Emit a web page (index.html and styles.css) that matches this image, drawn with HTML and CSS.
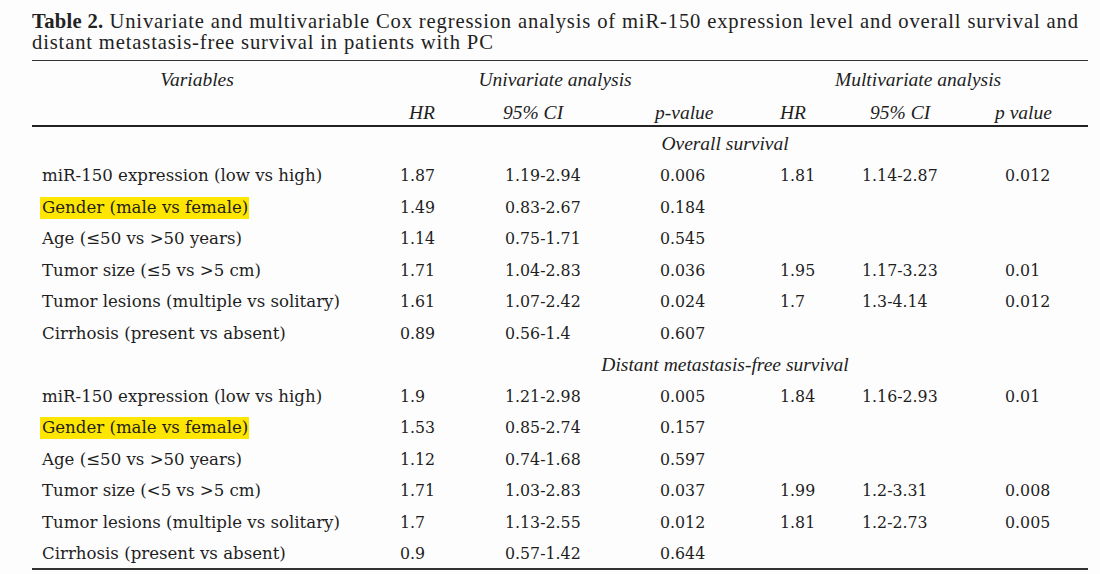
FILE: index.html
```html
<!DOCTYPE html>
<html lang="en">
<head>
<meta charset="utf-8">
<title>Table 2</title>
<link rel="stylesheet" href="styles.css">
</head>
<body>
<div class="page">
  <p class="caption"><span class="cap-label">Table 2.</span> Univariate and multivariable Cox regression analysis of miR-150 expression level and overall survival and<br>distant metastasis-free survival in patients with PC</p>
  <table class="tbl">
    <colgroup>
      <col class="c-var"><col class="c-hr"><col class="c-ci"><col class="c-p"><col class="c-mhr"><col class="c-mci"><col class="c-mp">
    </colgroup>
    <thead>
      <tr class="h1">
        <th class="h-var">Variables</th>
        <th colspan="3" class="h-uni">Univariate analysis</th>
        <th colspan="3" class="h-multi">Multivariate analysis</th>
      </tr>
      <tr class="h2">
        <th></th>
        <th class="s-hr">HR</th>
        <th class="s-ci">95% CI</th>
        <th class="s-p">p-value</th>
        <th class="s-mhr">HR</th>
        <th class="s-mci">95% CI</th>
        <th class="s-mp">p value</th>
      </tr>
    </thead>
    <tbody>
      <tr class="sec"><td></td><td colspan="6">Overall survival</td></tr>
      <tr><td class="lbl">miR-150 expression (low vs high)</td><td>1.87</td><td>1.19-2.94</td><td>0.006</td><td>1.81</td><td>1.14-2.87</td><td>0.012</td></tr>
      <tr><td class="lbl"><span class="hl">Gender (male vs female)</span></td><td>1.49</td><td>0.83-2.67</td><td>0.184</td><td></td><td></td><td></td></tr>
      <tr><td class="lbl">Age (≤50 vs &gt;50 years)</td><td>1.14</td><td>0.75-1.71</td><td>0.545</td><td></td><td></td><td></td></tr>
      <tr><td class="lbl">Tumor size (≤5 vs &gt;5 cm)</td><td>1.71</td><td>1.04-2.83</td><td>0.036</td><td>1.95</td><td>1.17-3.23</td><td>0.01</td></tr>
      <tr><td class="lbl">Tumor lesions (multiple vs solitary)</td><td>1.61</td><td>1.07-2.42</td><td>0.024</td><td>1.7</td><td>1.3-4.14</td><td>0.012</td></tr>
      <tr><td class="lbl">Cirrhosis (present vs absent)</td><td>0.89</td><td>0.56-1.4</td><td>0.607</td><td></td><td></td><td></td></tr>
      <tr class="sec"><td></td><td colspan="6">Distant metastasis-free survival</td></tr>
      <tr><td class="lbl">miR-150 expression (low vs high)</td><td>1.9</td><td>1.21-2.98</td><td>0.005</td><td>1.84</td><td>1.16-2.93</td><td>0.01</td></tr>
      <tr><td class="lbl"><span class="hl">Gender (male vs female)</span></td><td>1.53</td><td>0.85-2.74</td><td>0.157</td><td></td><td></td><td></td></tr>
      <tr><td class="lbl">Age (≤50 vs &gt;50 years)</td><td>1.12</td><td>0.74-1.68</td><td>0.597</td><td></td><td></td><td></td></tr>
      <tr><td class="lbl">Tumor size (&lt;5 vs &gt;5 cm)</td><td>1.71</td><td>1.03-2.83</td><td>0.037</td><td>1.99</td><td>1.2-3.31</td><td>0.008</td></tr>
      <tr><td class="lbl">Tumor lesions (multiple vs solitary)</td><td>1.7</td><td>1.13-2.55</td><td>0.012</td><td>1.81</td><td>1.2-2.73</td><td>0.005</td></tr>
      <tr><td class="lbl">Cirrhosis (present vs absent)</td><td>0.9</td><td>0.57-1.42</td><td>0.644</td><td></td><td></td><td></td></tr>
    </tbody>
  </table>
</div>
</body>
</html>
```
FILE: styles.css
```css
html, body {
  margin: 0;
  padding: 0;
  background: #fdfdfd;
}
body {
  color: #1e1e1e;
  font-family: "DejaVu Serif", "Liberation Serif", serif;
}
.page {
  width: 1056px;
  padding: 11px 12px 0 32px;
}
.caption {
  margin: 0;
  font-family: "Liberation Serif", serif;
  font-size: 20.6px;
  letter-spacing: 0.85px;
  line-height: 21px;
  color: #222;
  height: 49px;
  white-space: nowrap;
}
.cap-label {
  font-weight: bold;
  letter-spacing: 0.3px;
}
.tbl {
  width: 1056px;
  border-collapse: collapse;
  table-layout: fixed;
  border-top: 1.5px solid #333;
  border-bottom: 2px solid #333;
}
.c-var { width: 358px; }
.c-hr { width: 105px; }
.c-ci { width: 155px; }
.c-p { width: 120px; }
.c-mhr { width: 82px; }
.c-mci { width: 143px; }
.c-mp { width: 93px; }

.tbl th {
  font-family: "Liberation Serif", serif;
  font-style: italic;
  font-weight: normal;
  font-size: 19.5px;
  text-align: left;
  padding: 0;
  white-space: nowrap;
}
.h1 th { height: 31px; padding-top: 3px; text-align: center; }
.h2 th { height: 25px; padding-top: 5px; }
.tbl thead { border-bottom: 2px solid #222; }
.h-var { padding-right: 28px !important; }
.h-uni { padding-right: 50px !important; }
.h-multi { padding-right: 22px !important; }
.s-hr { padding-left: 19px !important; }
.s-ci { padding-left: 8px !important; }
.s-p { padding-left: 5px !important; }
.s-mhr { padding-left: 10px !important; }
.s-mci { padding-left: 18px !important; }
.s-mp { padding-left: 0 !important; }

.tbl td {
  height: 28.5px;
  padding: 3px 0 0 10px;
  font-size: 15.8px;
  white-space: nowrap;
  vertical-align: middle;
}
.tbl td.lbl {
  padding-left: 10px;
  font-size: 16.6px;
}
.sec td {
  font-family: "Liberation Serif", serif;
  font-style: italic;
  font-size: 19.5px;
  text-align: center;
  padding-right: 38px;
}
.sec td:first-child { padding: 0; }
.hl {
  background: #ffe600;
  padding: 1px 1px 2px 2px;
  margin-left: -2px;
}
```
